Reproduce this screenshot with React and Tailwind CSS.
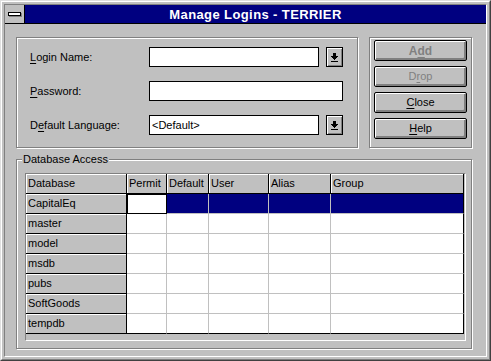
import React from "react";

const etched = "border border-[#808080] shadow-[inset_1px_1px_0_#fff,1px_1px_0_#fff]";

const U = ({ children }) => <span className="underline underline-offset-[2px]">{children}</span>;

function DropButton() {
  return (
    <div className="w-[17px] h-[20px] border border-black bg-[#c0c0c0] shadow-[inset_1px_1px_0_#fff,inset_-1px_-1px_0_#808080] flex items-center justify-center">
      <svg width="7" height="9" viewBox="0 0 7 9" shapeRendering="crispEdges" fill="#000">
        <rect x="2" y="0" width="3" height="3" />
        <rect x="0" y="3" width="7" height="1" />
        <rect x="1" y="4" width="5" height="1" />
        <rect x="2" y="5" width="3" height="1" />
        <rect x="3" y="6" width="1" height="1" />
        <rect x="0" y="8" width="7" height="1" />
      </svg>
    </div>
  );
}

function Button({ children, className = "" }) {
  return (
    <div
      className={`h-[21px] w-[93px] border border-black rounded-[2px] bg-[#c0c0c0] shadow-[inset_1px_1px_0_#fff,inset_-2px_-2px_0_#808080] flex items-center justify-center ${className}`}
    >
      {children}
    </div>
  );
}

const databases = ["CapitalEq", "master", "model", "msdb", "pubs", "SoftGoods", "tempdb"];
const columns = ["Permit", "Default", "User", "Alias", "Group"];

export default function App() {
  return (
    <div className="w-[491px] h-[361px] bg-[#c0c0c0] border border-t-[#dfdfdf] border-l-[#dfdfdf] border-r-[#404040] border-b-[#404040] font-['Liberation_Sans',Arial,sans-serif] text-[11px] text-black leading-none">
      <div className="h-full border border-t-white border-l-white border-r-[#808080] border-b-[#808080] p-[2px]">
        <div className="h-full border border-t-[#808080] border-l-[#808080] border-r-white border-b-white flex flex-col">
          {/* TITLE BAR */}
          <div className="h-[19px] flex border-b border-black shrink-0">
            <div className="w-[20px] border-r border-black flex items-center justify-center">
              <div className="w-[13px] h-[4px] bg-white border border-black shadow-[1px_1px_0_#808080] mr-[1px]" />
            </div>
            <div className="flex-1 bg-[#000080] text-white font-bold text-[13px] tracking-[0.4px] flex items-center justify-center">
              Manage Logins - TERRIER
            </div>
          </div>

          {/* CLIENT */}
          <div className="flex-1 pl-[11px] pt-[13px]">
            <div className="flex gap-[11px]">
              {/* LOGIN FIELDS */}
              <div className={`w-[342px] h-[111px] ${etched} pl-[13px] pt-[9px] flex flex-col gap-[14px]`}>
                <div className="flex items-center h-[20px]">
                  <div className="w-[119px]">
                    <U>L</U>ogin Name:
                  </div>
                  <div className="w-[170px] h-[20px] bg-white border border-black" />
                  <div className="ml-[7px]">
                    <DropButton />
                  </div>
                </div>
                <div className="flex items-center h-[20px]">
                  <div className="w-[119px]">
                    <U>P</U>assword:
                  </div>
                  <div className="w-[194px] h-[20px] bg-white border border-black" />
                </div>
                <div className="flex items-center h-[20px]">
                  <div className="w-[119px]">
                    D<U>e</U>fault Language:
                  </div>
                  <div className="w-[170px] h-[20px] bg-white border border-black flex items-center pl-[2px]">
                    &lt;Default&gt;
                  </div>
                  <div className="ml-[7px]">
                    <DropButton />
                  </div>
                </div>
              </div>

              {/* BUTTONS */}
              <div className={`w-[103px] h-[111px] ${etched} pl-[4px] pt-[2px] flex flex-col gap-[5px]`}>
                <Button className="text-[#808080] font-bold text-[12px]">
                  A<U>d</U>d
                </Button>
                <Button className="text-[#808080]">
                  D<U>r</U>op
                </Button>
                <Button>
                  <U>C</U>lose
                </Button>
                <Button>
                  <U>H</U>elp
                </Button>
              </div>
            </div>

            {/* DATABASE ACCESS */}
            <div className={`relative mt-[11px] w-[456px] h-[190px] ${etched} pl-[8px] pt-[13px]`}>
              <div className="absolute left-[5px] top-[-6px] px-[1px] bg-[#c0c0c0]">Database Access</div>

              <div className="w-[441px] h-[168px] border border-t-[#808080] border-l-[#808080] border-r-white border-b-white">
                <div className="w-[438px] grid grid-cols-[101px_40px_42px_60px_62px_133px]">
                  <div className="h-[20px] bg-[#c0c0c0] border-r border-b border-black shadow-[inset_1px_1px_0_#fff] pl-[2px] flex items-center">
                    Database
                  </div>
                  {columns.map((c, i) => (
                    <div
                      key={c}
                      className="h-[20px] bg-[#c0c0c0] border-r border-b border-black shadow-[inset_1px_1px_0_#fff] pl-[2px] flex items-center"
                    >
                      {c}
                    </div>
                  ))}

                  {databases.map((db, r) => {
                    const last = r === databases.length - 1;
                    const selected = r === 0;
                    return (
                      <React.Fragment key={db}>
                        <div className="h-[20px] bg-[#c0c0c0] border-r border-b border-black shadow-[inset_1px_1px_0_#fff] pl-[2px] flex items-center">
                          {db}
                        </div>
                        {columns.map((c, i) => {
                          const lastCol = i === columns.length - 1;
                          let cls = "h-[20px] border-r border-b ";
                          cls += lastCol ? "border-r-black " : "border-r-[#c0c0c0] ";
                          cls += last ? "border-b-black " : "border-b-[#c0c0c0] ";
                          if (selected && i === 0) {
                            cls = "h-[20px] border-r border-b border-black bg-white shadow-[inset_1px_1px_0_#000]";
                          } else if (selected) {
                            cls += "bg-[#000080]";
                          } else {
                            cls += "bg-white";
                          }
                          return <div key={c} className={cls} />;
                        })}
                      </React.Fragment>
                    );
                  })}
                </div>
              </div>
            </div>
          </div>
        </div>
      </div>
    </div>
  );
}
